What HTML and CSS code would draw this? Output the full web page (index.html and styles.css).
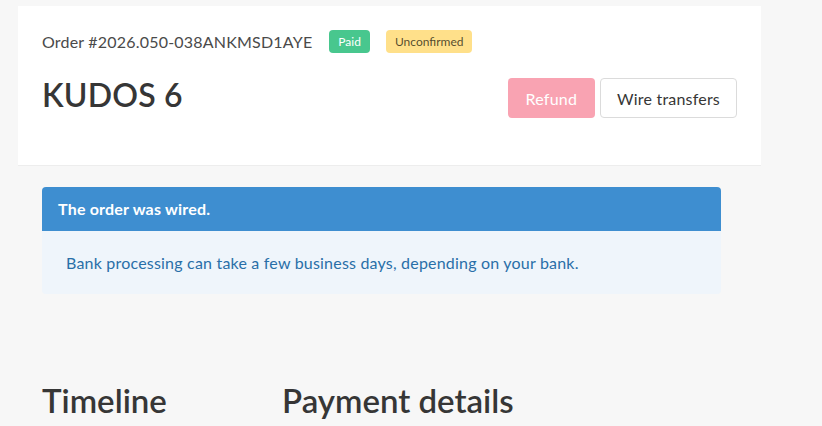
FILE: index.html
```html
<!DOCTYPE html>
<html lang="en">
<head>
    <meta charset="UTF-8">
    <meta name="viewport" content="width=device-width, initial-scale=1.0">
    <title>Order details</title>
    <link rel="stylesheet" href="styles.css">
</head>
<body>
    <section class="hero">
        <div class="hero-top">
            <span class="order-id">Order #2026.050-038ANKMSD1AYE</span>
            <span class="tag tag-paid">Paid</span>
            <span class="tag tag-warn">Unconfirmed</span>
        </div>
        <div class="hero-main">
            <h1 class="amount">KUDOS 6</h1>
            <div class="buttons">
                <button class="button button-danger" disabled>Refund</button>
                <button class="button">Wire transfers</button>
            </div>
        </div>
    </section>

    <article class="message">
        <div class="message-header">The order was wired.</div>
        <div class="message-body">Bank processing can take a few business days, depending on your bank.</div>
    </article>

    <div class="columns">
        <div class="column-timeline">
            <h2 class="section-title">Timeline</h2>
        </div>
        <div class="column-details">
            <h2 class="section-title">Payment details</h2>
        </div>
    </div>
</body>
</html>
```

FILE: styles.css
```css
body {
    margin: 0;
    background-color: #f7f7f7;
    font-family: Lato, "Open Sans", sans-serif;
    color: #4a4a4a;
    letter-spacing: 0.2px;
}
.hero {
    margin: 6px 0 0 18px;
    width: 743px;
    height: 160px;
    box-sizing: border-box;
    padding: 23px 24px 0 24px;
    background-color: white;
    border-bottom: 1px solid #ededed;
}
.hero-top {
    display: flex;
    align-items: center;
    height: 24px;
}
.order-id {
    font-size: 16px;
    margin-right: 17px;
}
.tag {
    display: inline-flex;
    align-items: center;
    height: 23px;
    padding: 0 9px;
    border-radius: 4px;
    font-size: 12px;
    letter-spacing: 0;
}
.tag-paid {
    background-color: #48c78e;
    color: white;
    margin-right: 16px;
}
.tag-warn {
    background-color: #ffe08a;
    color: rgba(0,0,0,0.7);
}
.hero-main {
    display: flex;
    justify-content: space-between;
    align-items: flex-start;
    margin-top: 20px;
}
.amount {
    margin: 3px 0 0 0;
    font-size: 32px;
    font-weight: 600;
    color: #363636;
    line-height: 1.2;
}
.buttons {
    display: flex;
    gap: 5px;
    margin-top: 5px;
}
.button {
    height: 40px;
    padding: 0 16px;
    border: 1px solid #dbdbdb;
    border-radius: 4px;
    background-color: white;
    color: #363636;
    font-family: inherit;
    font-size: 16px;
    letter-spacing: 0.2px;
}
.button-danger {
    background-color: #f9a3b2;
    border-color: transparent;
    color: white;
    padding: 0 17px;
}
.message {
    margin: 21px 0 0 42px;
    width: 679px;
    border-radius: 4px;
    background-color: #eff5fb;
    font-size: 16px;
}
.message-header {
    background-color: #3e8ed0;
    color: white;
    font-weight: 700;
    padding: 12px 16px;
    line-height: 20px;
    border-radius: 4px 4px 0 0;
}
.message-body {
    color: #296fa8;
    padding: 20px 24px 19px 24px;
    line-height: 24px;
}
.columns {
    display: flex;
    margin: 87px 0 0 42px;
}
.column-timeline {
    width: 240px;
}
.section-title {
    margin: 0;
    font-size: 33px;
    font-weight: 600;
    color: #363636;
    line-height: 1.2;
    letter-spacing: 0;
}
```
